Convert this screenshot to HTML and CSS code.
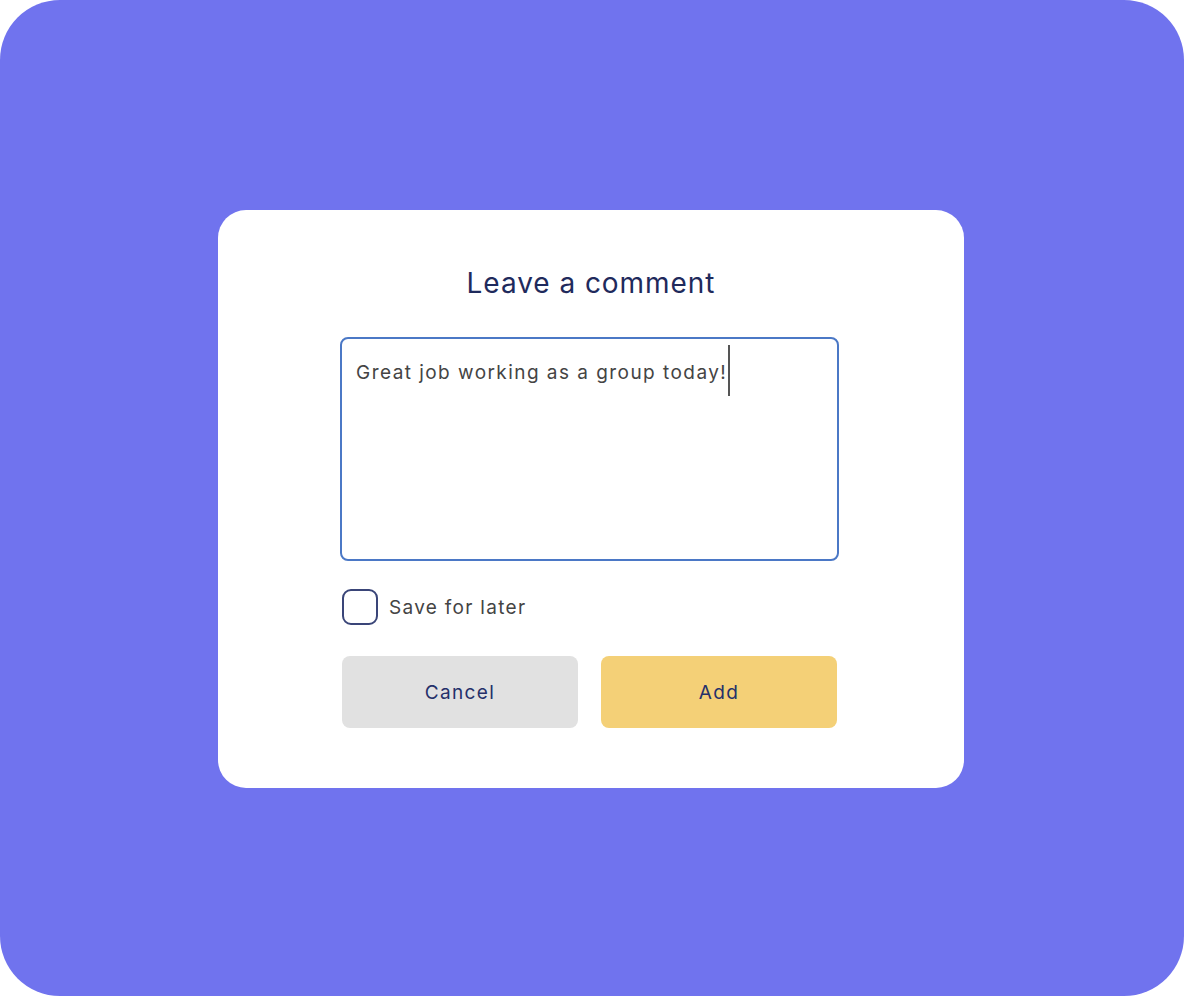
FILE: index.html
```html
<!DOCTYPE html>
<html lang="en">
<head>
<meta charset="utf-8">
<title>Leave a comment</title>
<link rel="stylesheet" href="styles.css">
</head>
<body>
<div class="frame">
  <div class="card">
    <h1 class="title">Leave a comment</h1>
    <div class="column">
      <div class="textarea"><span class="typed">Great job working as a group today!</span><span class="caret"></span></div>
      <label class="check-row">
        <span class="checkbox"></span>
        <span class="check-label">Save for later</span>
      </label>
      <div class="actions">
        <button class="btn btn-cancel">Cancel</button>
        <button class="btn btn-add">Add</button>
      </div>
    </div>
  </div>
</div>
</body>
</html>
```

FILE: styles.css
```css
html, body {
  margin: 0;
  padding: 0;
  background: #ffffff;
}

body {
  font-family: "Inter", "Noto Sans", "DejaVu Sans", sans-serif;
}

.frame {
  box-sizing: border-box;
  width: 1184px;
  height: 996px;
  background: #7073ee;
  border-radius: 60px;
  padding: 210px 0 0 218px;
}

.card {
  box-sizing: border-box;
  width: 746px;
  height: 578px;
  background: #ffffff;
  border-radius: 28px;
  padding: 56px 0 0 124px;
}

.title {
  margin: 0 0 0 -124px;
  width: 746px;
  text-align: center;
  font-size: 28px;
  line-height: 34px;
  font-weight: 400;
  letter-spacing: 0.95px;
  color: #1f2a5c;
}

.column {
  width: 495px;
  margin-top: 37px;
}

.textarea {
  box-sizing: border-box;
  width: 499px;
  height: 224px;
  margin-left: -2px;
  border: 2px solid #4b78c6;
  border-radius: 8px;
  padding: 6px 14px 0 14px;
  font-size: 19px;
  line-height: 28px;
  letter-spacing: 1.45px;
  color: #444444;
}

.caret {
  display: inline-block;
  width: 2px;
  height: 51px;
  background: #555555;
  vertical-align: -17px;
  margin-left: 1px;
}

.check-row {
  display: flex;
  align-items: center;
  margin-top: 28px;
}

.checkbox {
  box-sizing: border-box;
  width: 36px;
  height: 36px;
  border: 2px solid #3a4578;
  border-radius: 9px;
}

.check-label {
  margin-left: 11px;
  font-size: 19px;
  letter-spacing: 1.3px;
  color: #444444;
}

.actions {
  display: flex;
  gap: 23px;
  margin-top: 31px;
}

.btn {
  width: 236px;
  height: 72px;
  border: none;
  border-radius: 8px;
  font-family: inherit;
  font-size: 19px;
  letter-spacing: 1.4px;
  color: #25306a;
}

.btn-cancel {
  background: #e1e1e1;
}

.btn-add {
  background: #f4d077;
}
```
